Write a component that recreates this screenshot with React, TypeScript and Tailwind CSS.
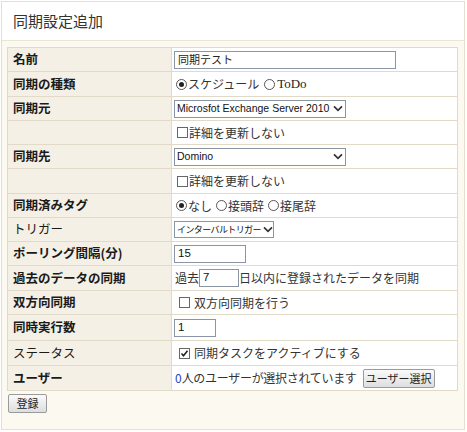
import React from "react";

function Radio({ checked }: { checked?: boolean }) {
  return (
    <span className="inline-flex w-[11px] h-[11px] rounded-full border border-[#555] items-center justify-center mr-[1px] shrink-0 bg-white">
      {checked ? <span className="w-[5px] h-[5px] rounded-full bg-[#222]" /> : null}
    </span>
  );
}

function Check({ checked }: { checked?: boolean }) {
  return (
    <span className="inline-flex w-[11px] h-[11px] border border-[#666] items-center justify-center shrink-0 bg-white">
      {checked ? (
        <svg width="9" height="9" viewBox="0 0 9 9">
          <path d="M1.5 4.5 L3.5 6.8 L7.5 1.8" stroke="#222" strokeWidth="1.6" fill="none" />
        </svg>
      ) : null}
    </span>
  );
}

function Chevron() {
  return (
    <svg width="10" height="7" viewBox="0 0 10 7" className="shrink-0 ml-[2px]">
      <path d="M1 1.3 L5 5.3 L9 1.3" stroke="#333" strokeWidth="1.7" fill="none" />
    </svg>
  );
}

function Row({
  label,
  bold = true,
  h,
  last,
  children,
}: {
  label: string;
  bold?: boolean;
  h: string;
  last?: boolean;
  children?: React.ReactNode;
}) {
  return (
    <div className={`flex ${h} ${last ? "" : "border-b border-[#e2dac8]"}`}>
      <div
        className={`w-[164px] shrink-0 bg-[#f4f0e6] border-r border-[#e2dac8] pl-[5px] flex items-center text-[12.5px] text-[#1a1a1a] whitespace-nowrap ${bold ? "font-bold" : "font-normal"}`}
      >
        {label}
      </div>
      <div className="flex-1 bg-white pl-[1px] flex items-center text-[12px] text-[#333] whitespace-nowrap">{children}</div>
    </div>
  );
}

export default function App() {
  return (
    <div className="font-['Noto_Sans_CJK_JP','Noto_Sans',sans-serif] w-[467px] h-[432px] bg-white pt-[1px] pl-[1px]">
      <div className="w-[464px] h-[429px] border border-[#e5dfcf] bg-[#fcf9f1] flex flex-col">
        <div className="h-[39px] bg-white border-b border-[#ebe5d6] flex items-center pl-[11px] text-[15px] text-[#333]">
          同期設定追加
        </div>
        <div className="pl-[5px] pr-[6px] pt-[6px]">
          <div className="border border-[#e2dac8]">
            <Row label="名前" h="h-[24px]">
              <div className="ml-[1px] w-[222px] h-[18px] border border-[#8a96a3] bg-white flex items-center pl-[3px] text-[11px] text-[#222]">
                同期テスト
              </div>
            </Row>
            <Row label="同期の種類" h="h-[25px]">
              <span className="flex items-center ml-[3px]">
                <Radio checked />
                <span>スケジュール</span>
                <span className="ml-[5px]" />
                <Radio />
                <span className="font-['Liberation_Serif',serif] text-[13px] text-[#222] ml-[1px]">ToDo</span>
              </span>
            </Row>
            <Row label="同期元" h="h-[24px]">
              <div className="ml-[1px] w-[172px] h-[18px] border border-[#8a96a3] bg-white flex items-center justify-between pl-[2px] pr-[2px] font-['Liberation_Sans',sans-serif] text-[10.5px] text-[#111] overflow-hidden">
                <span className="whitespace-nowrap">Microsfot Exchange Server 2010</span>
                <Chevron />
              </div>
            </Row>
            <Row label="" h="h-[24px]">
              <span className="flex items-center ml-[4px]">
                <Check />
                <span className="ml-[1px]">詳細を更新しない</span>
              </span>
            </Row>
            <Row label="同期先" h="h-[24px]">
              <div className="ml-[1px] w-[172px] h-[18px] border border-[#8a96a3] bg-white flex items-center justify-between pl-[2px] pr-[2px] font-['Liberation_Sans',sans-serif] text-[10.5px] text-[#111]">
                <span>Domino</span>
                <Chevron />
              </div>
            </Row>
            <Row label="" h="h-[25px]">
              <span className="flex items-center ml-[4px]">
                <Check />
                <span className="ml-[1px]">詳細を更新しない</span>
              </span>
            </Row>
            <Row label="同期済みタグ" h="h-[24px]">
              <span className="flex items-center ml-[3px]">
                <Radio checked />
                <span>なし</span>
                <span className="ml-[4px]" />
                <Radio />
                <span>接頭辞</span>
                <span className="ml-[4px]" />
                <Radio />
                <span>接尾辞</span>
              </span>
            </Row>
            <Row label="トリガー" bold={false} h="h-[24px]">
              <div className="ml-[1px] w-[100px] h-[17px] border border-[#8a96a3] bg-white flex items-center justify-between pl-[2px] pr-[2px] text-[9px] text-[#111] tracking-[-0.6px] overflow-hidden">
                <span className="whitespace-nowrap">インターバルトリガー</span>
                <Chevron />
              </div>
            </Row>
            <Row label="ポーリング間隔(分)" h="h-[24px]">
              <div className="ml-[1px] w-[72px] h-[18px] border border-[#8a96a3] bg-white flex items-center pl-[3px] font-['Liberation_Sans',sans-serif] text-[11.5px] text-[#111]">
                15
              </div>
            </Row>
            <Row label="過去のデータの同期" h="h-[25px]">
              <span className="flex items-center ml-[2px]">
                <span>過去</span>
                <div className="w-[40px] h-[18px] border border-[#8a96a3] bg-white flex items-center pl-[3px] font-['Liberation_Sans',sans-serif] text-[11.5px] text-[#111]">
                  7
                </div>
                <span>日以内に登録されたデータを同期</span>
              </span>
            </Row>
            <Row label="双方向同期" h="h-[24px]">
              <span className="flex items-center ml-[6px]">
                <Check />
                <span className="ml-[4px]">双方向同期を行う</span>
              </span>
            </Row>
            <Row label="同時実行数" h="h-[26px]">
              <div className="ml-[1px] w-[42px] h-[18px] border border-[#8a96a3] bg-white flex items-center pl-[3px] font-['Liberation_Sans',sans-serif] text-[11.5px] text-[#111]">
                1
              </div>
            </Row>
            <Row label="ステータス" bold={false} h="h-[25px]">
              <span className="flex items-center ml-[6px]">
                <Check checked />
                <span className="ml-[4px]">同期タスクをアクティブにする</span>
              </span>
            </Row>
            <Row label="ユーザー" h="h-[24px]" last>
              <span className="flex items-center ml-[2px]">
                <span className="text-[#2a3fb5]">0</span>
                <span className="tracking-[-0.3px]">人のユーザーが選択されています</span>
                <button className="ml-[6px] w-[72px] h-[19px] border border-[#9a9a9a] rounded-[2px] bg-gradient-to-b from-[#fafafa] to-[#dedede] text-[11px] text-[#222] flex items-center justify-center">
                  ユーザー選択
                </button>
              </span>
            </Row>
          </div>
          <button className="mt-[3px] ml-[1px] w-[39px] h-[19px] border border-[#9a9a9a] rounded-[2px] bg-gradient-to-b from-[#fafafa] to-[#dedede] text-[11px] text-[#222] flex items-center justify-center">
            登録
          </button>
        </div>
      </div>
    </div>
  );
}
